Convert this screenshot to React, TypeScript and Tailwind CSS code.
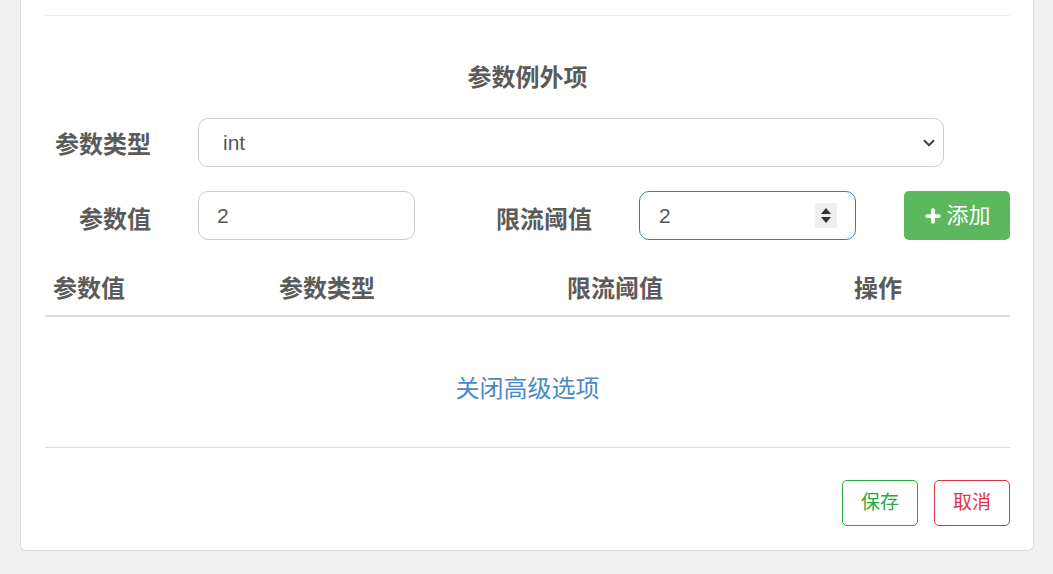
import { ChevronDown, Plus } from 'lucide-react';

const FONT = { fontFamily: '"Liberation Sans", "Noto Sans CJK SC", sans-serif' };

export default function App() {
  return (
    <div className="min-h-screen bg-[#f0f0f0] pl-[20px] pr-[19px]" style={FONT}>
      <div className="rounded-b-[6px] border-x border-b border-[#dcdcdc] bg-white pl-[24px] pr-[23px] pb-[24px]">
        <div className="pt-[15px]">
          <div className="h-px bg-[#eeeeee]" />
        </div>

        {/* Title */}
        <h3 className="mt-[45px] text-center text-[24px] font-bold leading-[34px] text-[#5b5b5b]">
          参数例外项
        </h3>

        {/* Param type */}
        <div className="mt-[23px] flex items-center">
          <label className="w-[106px] pt-[4px] text-right text-[24px] font-bold text-[#5b5b5b]">参数类型</label>
          <div className="relative ml-[47px] w-[746px]">
            <select
              defaultValue="int"
              className="h-[49px] w-full appearance-none rounded-[10px] border border-[#cccccc] bg-white pl-[24px] pr-[40px] text-[21px] text-[#555555] outline-none"
            >
              <option value="int">int</option>
              <option value="long">long</option>
              <option value="string">String</option>
            </select>
            <ChevronDown
              size={18}
              strokeWidth={2.6}
              className="pointer-events-none absolute right-[6px] top-[16px] text-[#444444]"
            />
          </div>
        </div>

        {/* Param value + threshold */}
        <div className="mt-[24px] flex items-center">
          <label className="w-[106px] pt-[8px] text-right text-[24px] font-bold text-[#5b5b5b]">参数值</label>
          <input
            type="text"
            defaultValue="2"
            className="ml-[47px] h-[49px] w-[217px] rounded-[10px] border border-[#cccccc] px-[18px] text-[21px] text-[#555555] outline-none"
          />
          <label className="w-[177px] pt-[8px] text-right text-[24px] font-bold text-[#5b5b5b]">限流阈值</label>
          <div className="relative ml-[47px] w-[217px]">
            <input
              type="number"
              defaultValue={2}
              className="h-[49px] w-full rounded-[10px] border border-[#3a7bc0] px-[19px] text-[21px] text-[#555555] outline-none [appearance:textfield] [&::-webkit-inner-spin-button]:appearance-none [&::-webkit-outer-spin-button]:appearance-none"
            />
            {/* spinner */}
            <div className="pointer-events-none absolute right-[19px] top-[12px] flex h-[25px] w-[22px] flex-col items-center justify-center gap-[3px] bg-[#efefef]">
              <svg width="10" height="6" viewBox="0 0 10 6"><path d="M5 0 L10 6 L0 6 Z" fill="#333" /></svg>
              <svg width="10" height="6" viewBox="0 0 10 6"><path d="M0 0 L10 0 L5 6 Z" fill="#333" /></svg>
            </div>
          </div>
          <button
            type="button"
            className="ml-[48px] flex h-[49px] w-[106px] items-center justify-center gap-[3px] rounded-[5px] bg-[#5cb85c] text-[22px] text-white"
          >
            <Plus size={20} strokeWidth={4.5} />
            添加
          </button>
        </div>

        {/* Table */}
        <table className="mt-[22px] w-full table-fixed border-collapse">
          <thead>
            <tr className="border-b-2 border-[#dddddd]">
              <th className="w-[226px] pb-[9px] pl-[8px] pt-[10px] text-left text-[24px] font-bold leading-[34px] text-[#5b5b5b]">参数值</th>
              <th className="w-[288px] pb-[9px] pl-[8px] pt-[10px] text-left text-[24px] font-bold leading-[34px] text-[#5b5b5b]">参数类型</th>
              <th className="w-[287px] pb-[9px] pl-[8px] pt-[10px] text-left text-[24px] font-bold leading-[34px] text-[#5b5b5b]">限流阈值</th>
              <th className="pb-[9px] pl-[8px] pt-[10px] text-left text-[24px] font-bold leading-[34px] text-[#5b5b5b]">操作</th>
            </tr>
          </thead>
          <tbody />
        </table>

        <div className="mt-[55px] text-center">
          <a href="#" className="text-[24px] leading-[34px] text-[#4a89c8]">关闭高级选项</a>
        </div>

        <div className="mt-[41px] h-px bg-[#dddddd]" />

        <div className="mt-[32px] flex justify-end gap-[16px]">
          <button type="button" className="h-[46px] w-[76px] rounded-[5px] border border-[#28a745] text-[19px] text-[#28a745]">
            保存
          </button>
          <button type="button" className="h-[46px] w-[76px] rounded-[5px] border border-[#dc3545] text-[19px] text-[#dc3545]">
            取消
          </button>
        </div>
      </div>
    </div>
  );
}
